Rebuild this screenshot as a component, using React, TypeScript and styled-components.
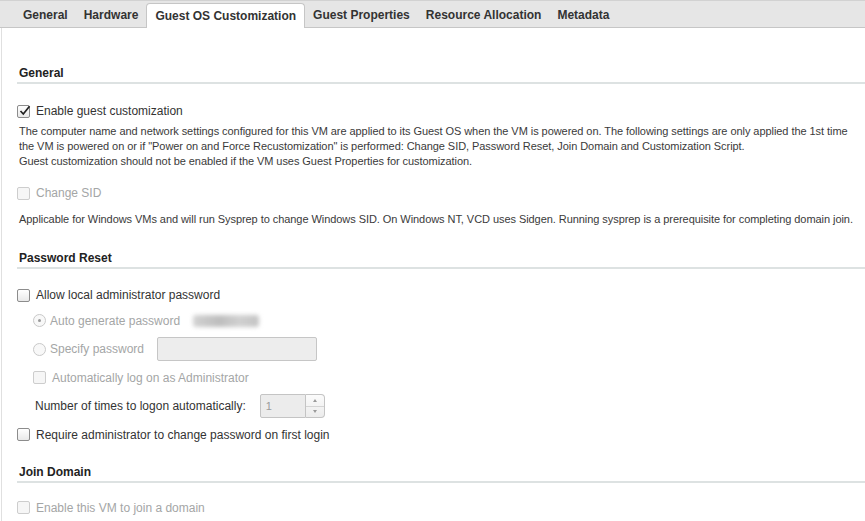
import React from "react";
import styled, { createGlobalStyle, css } from "styled-components";

const Global = createGlobalStyle`
  html, body { margin: 0; padding: 0; background: #fff; }
  body { font-family: "Liberation Sans", Arial, sans-serif; color: #333; }
  * { box-sizing: border-box; }
`;

const Page = styled.div`
  width: 865px;
  height: 521px;
  overflow: hidden;
  display: flex;
  flex-direction: column;
`;

const TabBar = styled.div`
  height: 28px;
  background: #e6e6e6;
  border-top: 1px solid #d2d2d2;
  border-bottom: 1px solid #c6c6c6;
  display: flex;
  align-items: flex-end;
  padding-left: 15px;
`;

const Tab = styled.div<{ $active?: boolean }>`
  height: 24px;
  line-height: 22px;
  padding: 0 8px;
  font-size: 12px;
  font-weight: bold;
  color: #333;
  white-space: nowrap;
  margin-bottom: -1px;
  ${(p) =>
    p.$active &&
    css`
      background: #fff;
      border: 1px solid #c6c6c6;
      border-bottom: none;
      border-radius: 4px 4px 0 0;
      height: 25px;
      line-height: 24px;
    `}
`;

const Content = styled.div`
  flex: 1;
  margin-left: 1px;
  border-left: 1px solid #e0e0e0;
  padding: 14px 0 0 15px;
  display: flex;
  flex-direction: column;
`;

const Heading = styled.div<{ $top?: number }>`
  margin-top: ${(p) => p.$top ?? 24}px;
  font-size: 12px;
  line-height: 14px;
  font-weight: bold;
  color: #222;
  padding: 0 0 2px 2px;
  border-bottom: 2px solid #dde2e2;
`;

const Body = styled.div<{ $top?: number }>`
  margin-top: ${(p) => p.$top ?? 16}px;
  display: flex;
  flex-direction: column;
`;

const Desc = styled.div<{ $top: number }>`
  margin-top: ${(p) => p.$top}px;
  padding-left: 2px;
  font-size: 11px;
  line-height: 15px;
  letter-spacing: -0.06px;
  color: #3a3a3a;
  white-space: nowrap;
`;

const Options = styled.div`
  display: flex;
  flex-direction: column;
  gap: 7.5px;
`;

const Row = styled.label<{ $indent?: number; $tall?: boolean; $disabled?: boolean }>`
  display: flex;
  align-items: center;
  height: ${(p) => (p.$tall ? 24 : 18)}px;
  padding-left: ${(p) => p.$indent ?? 0}px;
  font-size: 12px;
  color: ${(p) => (p.$disabled ? "#a4a6a6" : "#333")};
  white-space: nowrap;
`;

const Box = styled.span<{ $disabled?: boolean }>`
  width: 13px;
  height: 13px;
  flex: none;
  border: 1px solid ${(p) => (p.$disabled ? "#cdcdcd" : "#8c8c8c")};
  border-radius: 2px;
  background: ${(p) =>
    p.$disabled ? "#f6f6f6" : "linear-gradient(#ffffff, #e9e9e9)"};
  margin-right: 6px;
  position: relative;
  display: inline-flex;
  align-items: center;
  justify-content: center;
`;

const Radio = styled.span<{ $on?: boolean }>`
  width: 13px;
  height: 13px;
  flex: none;
  border-radius: 50%;
  border: 1px solid #c9c9c9;
  background: #f8f8f8;
  margin-right: 4px;
  display: inline-flex;
  align-items: center;
  justify-content: center;
  &::after {
    content: "";
    width: 3px;
    height: 3px;
    border-radius: 50%;
    background: ${(p) => (p.$on ? "#9a9a9a" : "transparent")};
  }
`;

const Blur = styled.span`
  margin-left: 13px;
  width: 66px;
  height: 12px;
  background: linear-gradient(90deg, #d2d2d2, #bdbdbd 40%, #d0d0d0 70%, #c4c4c4);
  filter: blur(2px);
  border-radius: 3px;
`;

const TextInput = styled.span`
  margin-left: 13px;
  width: 160px;
  height: 24px;
  background: #ededed;
  border: 1px solid #c6c6c6;
  border-radius: 2px;
`;

const Spinner = styled.span`
  margin-left: 14px;
  display: inline-flex;
  height: 24px;
`;

const SpinValue = styled.span`
  width: 46px;
  height: 24px;
  background: #ececec;
  border: 1px solid #c4c4c4;
  border-radius: 2px 0 0 2px;
  font-size: 11px;
  color: #9a9a9a;
  padding-left: 5px;
  display: flex;
  align-items: center;
`;

const SpinButtons = styled.span`
  width: 19px;
  height: 24px;
  border: 1px solid #c4c4c4;
  border-left: none;
  border-radius: 0 4px 4px 0;
  background: linear-gradient(#fbfbfb, #ececec);
  display: flex;
  flex-direction: column;
`;

const SpinHalf = styled.span<{ $down?: boolean }>`
  flex: 1;
  display: flex;
  align-items: center;
  justify-content: center;
  border-top: ${(p) => (p.$down ? "1px solid #d4d4d4" : "none")};
  &::after {
    content: "";
    border-left: 2.5px solid transparent;
    border-right: 2.5px solid transparent;
    ${(p) =>
      p.$down
        ? "border-top: 3px solid #9a9a9a;"
        : "border-bottom: 3px solid #9a9a9a;"}
  }
`;

const Check = () => (
  <svg width="12" height="11" viewBox="0 0 12 11" style={{ position: "absolute", left: 1, top: -1 }}>
    <path d="M1.5 6 L4.3 9 L10.5 1.2" fill="none" stroke="#222" strokeWidth="1.7" />
  </svg>
);

export default function App() {
  return (
    <Page>
      <Global />
      <TabBar>
        <Tab>General</Tab>
        <Tab>Hardware</Tab>
        <Tab $active>Guest OS Customization</Tab>
        <Tab>Guest Properties</Tab>
        <Tab>Resource Allocation</Tab>
        <Tab>Metadata</Tab>
      </TabBar>
      <Content>
        <Heading>General</Heading>
        <Body $top={18}>
          <Row>
            <Box>
              <Check />
            </Box>
            Enable guest customization
          </Row>
          <Desc $top={4}>
            The computer name and network settings configured for this VM are applied to its Guest OS when the VM is powered on. The following settings are only applied the 1st time
            <br />
            the VM is powered on or if "Power on and Force Recustomization" is performed: Change SID, Password Reset, Join Domain and Customization Script.
            <br />
            Guest customization should not be enabled if the VM uses Guest Properties for customization.
          </Desc>
          <Body $top={15}>
            <Row $disabled>
              <Box $disabled />
              Change SID
            </Row>
          </Body>
          <Desc $top={10}>
            Applicable for Windows VMs and will run Sysprep to change Windows SID. On Windows NT, VCD uses Sidgen. Running sysprep is a prerequisite for completing domain join.
          </Desc>
        </Body>

        <Heading>Password Reset</Heading>
        <Body $top={17}>
          <Options>
            <Row>
              <Box />
              Allow local administrator password
            </Row>
            <Row $indent={16} $disabled>
              <Radio $on />
              Auto generate password
              <Blur />
            </Row>
            <Row $indent={16} $tall $disabled>
              <Radio />
              Specify password
              <TextInput />
            </Row>
            <Row $indent={16} $disabled>
              <Box $disabled />
              Automatically log on as Administrator
            </Row>
            <Row $indent={18} $tall>
              Number of times to logon automatically:
              <Spinner>
                <SpinValue>1</SpinValue>
                <SpinButtons>
                  <SpinHalf />
                  <SpinHalf $down />
                </SpinButtons>
              </Spinner>
            </Row>
            <Row>
              <Box />
              Require administrator to change password on first login
            </Row>
          </Options>
        </Body>

        <Heading $top={21}>Join Domain</Heading>
        <Body $top={16}>
          <Row $disabled>
            <Box $disabled />
            Enable this VM to join a domain
          </Row>
        </Body>
      </Content>
    </Page>
  );
}
